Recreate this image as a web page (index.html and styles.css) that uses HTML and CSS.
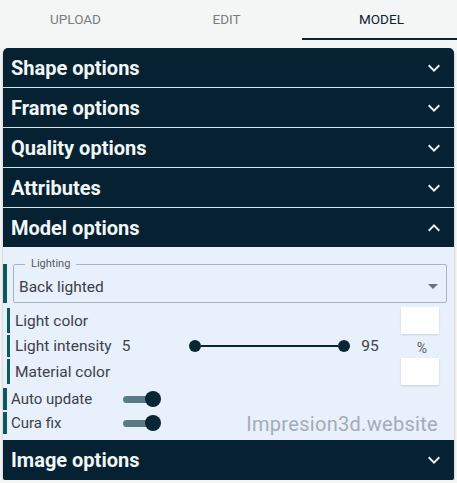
FILE: index.html
```html
<!DOCTYPE html>
<html lang="en">
<head>
  <meta charset="UTF-8" />
  <title>Model | Impresion3d</title>
  <meta name="viewport" content="width=device-width, initial-scale=1.0" />
  <link rel="stylesheet" href="styles.css">
</head>
<body>

  <div class="tabs">
    <div class="tab">Upload</div>
    <div class="tab">Edit</div>
    <div class="tab active">Model</div>
  </div>

  <div class="panel">
    <div class="head"><span>Shape options</span><svg class="chev" viewBox="0 0 24 24"><path d="M7.4 8.6 12 13.2l4.6-4.6L18 10l-6 6-6-6z"/></svg></div>
    <div class="head"><span>Frame options</span><svg class="chev" viewBox="0 0 24 24"><path d="M7.4 8.6 12 13.2l4.6-4.6L18 10l-6 6-6-6z"/></svg></div>
    <div class="head"><span>Quality options</span><svg class="chev" viewBox="0 0 24 24"><path d="M7.4 8.6 12 13.2l4.6-4.6L18 10l-6 6-6-6z"/></svg></div>
    <div class="head"><span>Attributes</span><svg class="chev" viewBox="0 0 24 24"><path d="M7.4 8.6 12 13.2l4.6-4.6L18 10l-6 6-6-6z"/></svg></div>
    <div class="head open"><span>Model options</span><svg class="chev" viewBox="0 0 24 24"><path d="M7.4 15.4 12 10.8l4.6 4.6L18 14l-6-6-6 6z"/></svg></div>

    <div class="content">
      <div class="row select-row">
        <div class="mark"></div>
        <div class="select">
          <span class="legend">Lighting</span>
          <span class="value">Back lighted</span>
          <svg class="caret" viewBox="0 0 10 5"><path d="M0 0h10L5 5z"/></svg>
        </div>
      </div>

      <div class="row sub swatch-row">
        <div class="mark"></div>
        <span class="label">Light color</span>
        <div class="swatch"></div>
      </div>

      <div class="row sub slider-row">
        <div class="mark"></div>
        <span class="label">Light intensity</span>
        <span class="num">5</span>
        <div class="range">
          <span class="knob"></span>
          <span class="line"></span>
          <span class="knob"></span>
        </div>
        <span class="num hi">95</span>
        <span class="unit">%</span>
      </div>

      <div class="row sub swatch-row tight">
        <div class="mark"></div>
        <span class="label">Material color</span>
        <div class="swatch"></div>
      </div>

      <div class="row toggle-row first">
        <div class="mark"></div>
        <span class="label">Auto update</span>
        <div class="toggle"><span class="track"></span><span class="thumb"></span></div>
      </div>

      <div class="row toggle-row">
        <div class="mark"></div>
        <span class="label">Cura fix</span>
        <div class="toggle"><span class="track"></span><span class="thumb"></span></div>
      </div>

      <div class="watermark">Impresion3d.website</div>
    </div>

    <div class="head last"><span>Image options</span><svg class="chev" viewBox="0 0 24 24"><path d="M7.4 8.6 12 13.2l4.6-4.6L18 10l-6 6-6-6z"/></svg></div>
  </div>

</body>
</html>
```

FILE: styles.css
```css
body {
  margin: 0;
  font-family: Roboto, 'Liberation Sans', sans-serif;
  background-color: #f4f5f5;
  color: #3a3f44;
}

.tabs {
  display: flex;
  height: 40px;
}

.tab {
  flex: 1;
  display: flex;
  align-items: center;
  justify-content: center;
  font-size: 13.5px;
  text-transform: uppercase;
  color: #7a7d80;
  padding-bottom: 2px;
  box-sizing: border-box;
}

.tab.active {
  color: #0a2431;
  border-bottom: 2px solid #0a2431;
  padding-bottom: 0;
  padding-left: 4px;
}

.panel {
  margin: 8px 3px 0;
  border-radius: 5px 5px 2px 2px;
  overflow: hidden;
  box-shadow: 0 2px 3px rgba(0, 0, 0, 0.25);
}

.head {
  height: 39px;
  background-color: #062232;
  color: #f2f7f7;
  font-size: 20px;
  font-weight: 700;
  display: flex;
  align-items: center;
  justify-content: space-between;
  padding: 0 8px 0 8px;
  border-bottom: 1px solid #cfe6ef;
}

.head.open {
  border-bottom: none;
}

.head.last {
  height: 40px;
  border-bottom: none;
}

.chev {
  width: 24px;
  height: 24px;
  fill: #e4eef0;
}

.content {
  position: relative;
  background-color: #e8f0fb;
  padding: 17px 0 4px;
  height: 193px;
  box-sizing: border-box;
}

.row {
  display: flex;
  align-items: center;
}

.mark {
  width: 3px;
  align-self: stretch;
  background-color: #0c5a5c;
}

.select-row .mark {
  width: 4px;
}

.select {
  position: relative;
  flex: 1;
  margin: 0 7px 0 6px;
  height: 39px;
  border: 1px solid #aab4c0;
  border-radius: 2px;
  box-sizing: border-box;
  display: flex;
  align-items: center;
  padding: 6px 0 0 5px;
}

.legend {
  position: absolute;
  top: -8px;
  left: 11px;
  padding: 0 6px;
  font-size: 11px;
  color: #555b60;
  background-color: #e8f0fb;
}

.value {
  flex: 1;
  font-size: 15.5px;
  color: #3a3f44;
}

.caret {
  width: 10px;
  height: 5px;
  fill: #6b7278;
  margin-right: 8px;
}

.sub {
  padding-left: 4px;
}

.sub .label {
  margin-left: 5px;
}

.label {
  font-size: 15.5px;
  color: #3d4247;
}

.swatch-row {
  margin-top: 5px;
  height: 25px;
}

.swatch-row.tight {
  margin-top: 2px;
}

.slider-row {
  margin-top: 2px;
  height: 22px;
}

.swatch {
  margin-left: auto;
  margin-right: 15px;
  width: 38px;
  height: 27px;
  background-color: #ffffff;
  box-shadow: 0 1px 2px rgba(0, 0, 0, 0.12);
}

.num {
  font-size: 15.5px;
  margin-left: 10px;
  color: #3d4247;
}

.num.hi {
  margin-left: 11px;
}

.range {
  display: flex;
  align-items: center;
  width: 161px;
  margin-left: 59px;
  height: 22px;
}

.knob {
  width: 12px;
  height: 12px;
  border-radius: 50%;
  background-color: #082633;
}

.line {
  flex: 1;
  height: 2px;
  background-color: #082633;
}

.unit {
  margin-left: 38px;
  font-size: 14px;
  color: #5a6066;
  padding-top: 4px;
}

.toggle-row {
  height: 22px;
  margin-top: 2px;
}

.toggle-row.first {
  margin-top: 4px;
}

.toggle-row .mark {
  width: 4px;
}

.toggle-row .label {
  margin-left: 4px;
  width: 112px;
  font-size: 15px;
}

.toggle {
  position: relative;
  width: 38px;
  height: 18px;
}

.track {
  position: absolute;
  left: 0;
  top: 6px;
  width: 34px;
  height: 7px;
  border-radius: 4px;
  background-color: #587c84;
}

.thumb {
  position: absolute;
  left: 22px;
  top: 1px;
  width: 16px;
  height: 16px;
  border-radius: 50%;
  background-color: #082633;
}

.watermark {
  position: absolute;
  right: 16px;
  bottom: 4px;
  font-size: 20px;
  color: #a3acb6;
  letter-spacing: 0.3px;
}
```
